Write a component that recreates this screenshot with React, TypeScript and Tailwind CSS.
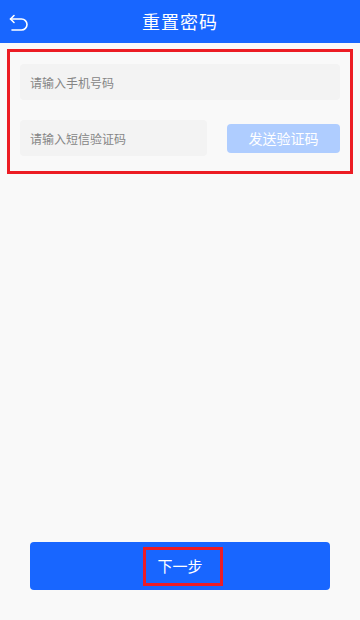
const FONT = "font-['Noto_Sans_CJK_SC','Noto_Sans',sans-serif]";

function BackIcon() {
  return (
    <svg width="20" height="20" viewBox="0 0 20 20" fill="none" stroke="white" strokeWidth="1.6" strokeLinecap="round" strokeLinejoin="round">
      <path d="M5 2.5 L1.5 6 L5 9.5" />
      <path d="M1.5 6 H12.5 a5.5 5.5 0 0 1 0 11 H3" />
    </svg>
  );
}

export default function App() {
  return (
    <div className={`${FONT} w-[360px] h-[620px] bg-[#f9f9f9] flex flex-col`}>
      {/* Header */}
      <div className="h-[43px] bg-[#1866ff] flex items-center relative shrink-0">
        <button className="pl-[9px] pt-[3px]">
          <BackIcon />
        </button>
        <div className="absolute inset-0 flex items-center justify-center pointer-events-none">
          <span className="text-white text-[18px] tracking-[1px]">重置密码</span>
        </div>
      </div>

      {/* Form (highlighted) */}
      <div className="mt-[6px] mx-[7px] h-[125px] border-[3px] border-[#ec1c24] px-[10px] pt-[12px] flex flex-col">
        <input
          className="h-[36px] w-full rounded-[4px] bg-[#f3f3f3] px-[10px] text-[12px] text-[#333] placeholder-[#858585] outline-none"
          placeholder="请输入手机号码"
        />
        <div className="mt-[20px] flex items-center">
          <input
            className="h-[36px] w-[187px] rounded-[4px] bg-[#f3f3f3] px-[10px] text-[12px] text-[#333] placeholder-[#858585] outline-none"
            placeholder="请输入短信验证码"
          />
          <button className="ml-[20px] h-[29px] w-[113px] rounded-[4px] bg-[#afcdff] text-white text-[14px]">
            发送验证码
          </button>
        </div>
      </div>

      <div className="flex-1" />

      {/* Next */}
      <div className="px-[30px] pb-[30px]">
        <button className="h-[48px] w-full rounded-[4px] bg-[#1866ff] flex items-center justify-center">
          <span className="ml-[5px] pr-[5px] w-[80px] h-[39px] border-[3px] border-[#ec1c24] flex items-center justify-center text-white text-[15px]">
            下一步
          </span>
        </button>
      </div>
    </div>
  );
}
